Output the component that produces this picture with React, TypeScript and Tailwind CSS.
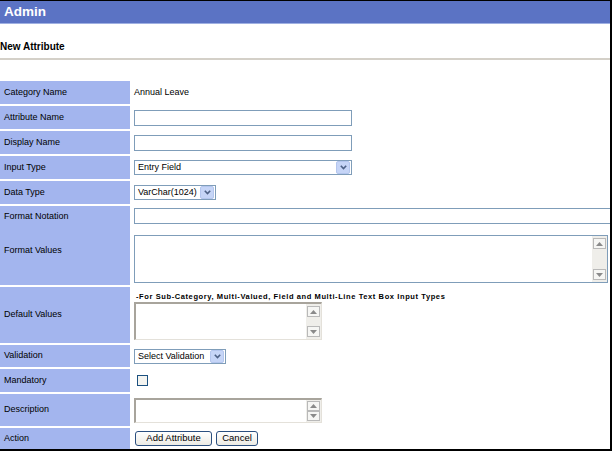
import React from "react";

const font = { fontFamily: '"Liberation Sans", Arial, sans-serif' };

function Arrow({ dir, h = "h-[11px]" }: { dir: "up" | "down"; h?: string }) {
  return (
    <div className={`w-[13px] ${h} border border-[#b9b9b9] bg-[#f6f6f4] flex items-center justify-center`}>
      <svg width="7" height="4" viewBox="0 0 7 4">
        {dir === "up" ? (
          <polygon points="0,4 7,4 3.5,0" fill="#8a8a8a" />
        ) : (
          <polygon points="0,0 7,0 3.5,4" fill="#8a8a8a" />
        )}
      </svg>
    </div>
  );
}

function ScrollBar({ h, py }: { h?: string; py: string }) {
  return (
    <div className={`h-full w-[15px] bg-[#efeeea] flex flex-col justify-between items-center ${py}`}>
      <Arrow dir="up" h={h} />
      <Arrow dir="down" h={h} />
    </div>
  );
}

function Chevron() {
  return (
    <div className="w-[14px] h-[13px] shrink-0 rounded-[2px] bg-[#c6d5f7] border border-[#b4c6ee] flex items-center justify-center">
      <svg width="7" height="5" viewBox="0 0 7 5">
        <polyline points="0.8,0.8 3.5,3.6 6.2,0.8" fill="none" stroke="#4d6185" strokeWidth="1.6" />
      </svg>
    </div>
  );
}

function Select({ w, text }: { w: string; text: string }) {
  return (
    <div className={`${w} h-[15px] border border-[#7f9db9] bg-white flex items-center justify-between pl-[3px] pr-[1px]`}>
      <span className="text-[9px] leading-none text-black whitespace-nowrap">{text}</span>
      <Chevron />
    </div>
  );
}

function Row({ h, label, children }: { h: string; label: string; children?: React.ReactNode }) {
  return (
    <div className={`flex ${h}`}>
      <div className="w-[130px] shrink-0 bg-[#a3b5ee] flex items-center pl-[4px] text-[9px] text-black">{label}</div>
      <div className="flex-1 flex items-center pl-[4px] min-w-0">{children}</div>
    </div>
  );
}

const inset =
  "border-t-2 border-l-2 border-r border-b border-t-[#a8a49c] border-l-[#a8a49c] border-r-[#e4e1da] border-b-[#e4e1da] bg-white flex justify-end";

export default function App() {
  return (
    <div style={font} className="w-[612px] h-[451px] overflow-hidden bg-white border-t border-r-2 border-b-2 border-black flex flex-col">
      <div className="h-[22px] bg-[#5b73c4] flex items-center pl-[4px] shrink-0">
        <span className="text-white font-bold text-[13.5px] leading-none">Admin</span>
      </div>
      <div className="h-[1px] bg-[#9fb0e2] shrink-0" />
      <div className="h-[34px] pt-[17px] shrink-0">
        <div className="text-[10px] leading-[12px] font-bold text-black">New Attribute</div>
      </div>
      <div className="h-[2px] bg-[#d4d0c8] shrink-0" />
      <div className="h-[21px] shrink-0" />
      <div className="flex flex-col gap-[2px] shrink-0">
        <Row h="h-[23px]" label="Category Name">
          <span className="text-[9px] text-black">Annual Leave</span>
        </Row>
        <Row h="h-[23px]" label="Attribute Name">
          <div className="w-[218px] h-[16px] border border-[#7f9db9] bg-white" />
        </Row>
        <Row h="h-[23px]" label="Display Name">
          <div className="w-[218px] h-[16px] border border-[#7f9db9] bg-white" />
        </Row>
        <Row h="h-[23px]" label="Input Type">
          <Select w="w-[218px]" text="Entry Field" />
        </Row>
        <Row h="h-[23px]" label="Data Type">
          <Select w="w-[82px]" text="VarChar(1024)" />
        </Row>
        <div className="flex h-[79px]">
          <div className="w-[130px] shrink-0 bg-[#a3b5ee] flex flex-col text-[9px] text-black pl-[4px]">
            <div className="h-[22px] flex items-center">Format Notation</div>
            <div className="h-[46px] flex items-center">Format Values</div>
          </div>
          <div className="flex-1 flex flex-col pl-[4px] pt-[2px] min-w-0">
            <div className="w-[480px] h-[16px] border border-[#7f9db9] bg-white shrink-0" />
            <div className="mt-[11px] w-[474px] h-[48px] border border-[#7f9db9] bg-white flex justify-end shrink-0">
              <ScrollBar py="py-[2px]" />
            </div>
          </div>
        </div>
        <div className="flex h-[56px]">
          <div className="w-[130px] shrink-0 bg-[#a3b5ee] flex items-center pl-[4px] text-[9px] text-black">Default Values</div>
          <div className="flex-1 flex flex-col pl-[4px] pt-[5px] min-w-0">
            <div className="h-[9px] leading-[9px] text-[7.5px] font-bold tracking-[0.6px] text-black pl-[2px] whitespace-nowrap">
              -For Sub-Category, Multi-Valued, Field and Multi-Line Text Box Input Types
            </div>
            <div className={`mt-[1px] w-[188px] h-[38px] ${inset}`}>
              <ScrollBar py="py-[2px]" />
            </div>
          </div>
        </div>
        <Row h="h-[22px]" label="Validation">
          <Select w="w-[92px]" text="Select Validation" />
        </Row>
        <Row h="h-[23px]" label="Mandatory">
          <div className="ml-[3px] w-[11px] h-[11px] border border-[#1c5180] bg-[#f4f4f0]" />
        </Row>
        <Row h="h-[32px]" label="Description">
          <div className={`w-[188px] h-[25px] ${inset}`}>
            <ScrollBar h="h-[10px]" py="py-[1px]" />
          </div>
        </Row>
        <Row h="h-[21px]" label="Action">
          <div className="flex gap-[4px] pl-[1px]">
            <div className="w-[77px] h-[15px] rounded-[3px] border border-[#2b4f7f] bg-gradient-to-b from-white to-[#ecebe4] flex items-center justify-center text-[9.5px] text-black">Add Attribute</div>
            <div className="w-[42px] h-[15px] rounded-[3px] border border-[#2b4f7f] bg-gradient-to-b from-white to-[#ecebe4] flex items-center justify-center text-[9.5px] text-black">Cancel</div>
          </div>
        </Row>
      </div>
    </div>
  );
}
